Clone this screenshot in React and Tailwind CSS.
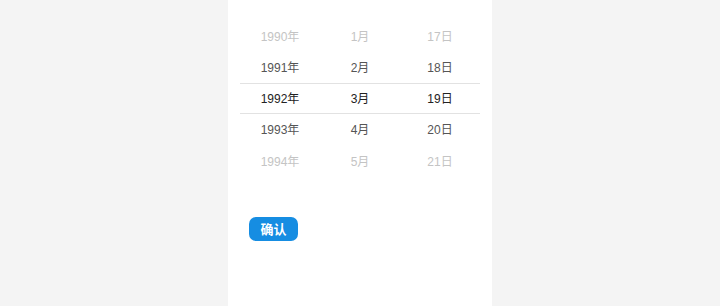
const years = ['1990年', '1991年', '1992年', '1993年', '1994年'];
const months = ['1月', '2月', '3月', '4月', '5月'];
const days = ['17日', '18日', '19日', '20日', '21日'];

const tone = ['text-[#c4c4c4]', 'text-[#555]', 'text-[#222]', 'text-[#555]', 'text-[#c4c4c4]'];

function Column({ items }) {
  return (
    <div className="flex flex-1 flex-col">
      {items.map((t, i) => (
        <div key={t} className={`flex h-[31.25px] items-center justify-center ${tone[i]}`}>
          {t}
        </div>
      ))}
    </div>
  );
}

export default function App() {
  return (
    <div
      className="flex h-[306px] w-[720px] justify-center bg-[#f4f4f4]"
      style={{ fontFamily: '"Liberation Sans", "Noto Sans CJK SC", sans-serif' }}
    >
      <div className="flex w-[264px] flex-col bg-white px-3 pt-[21px]">
        {/* picker */}
        <div className="relative flex text-[12px]">
          <div className="pointer-events-none absolute inset-x-0 top-[62px] h-[31px] border-y border-[#e2e2e2]" />
          <Column items={years} />
          <Column items={months} />
          <Column items={days} />
        </div>

        <div className="pl-[9px] pt-[40px]">
          <button className="flex h-[24px] w-[49px] items-center justify-center rounded-[7px] bg-[#168de2] text-[13px] font-bold text-white">
            确认
          </button>
        </div>
      </div>
    </div>
  );
}
